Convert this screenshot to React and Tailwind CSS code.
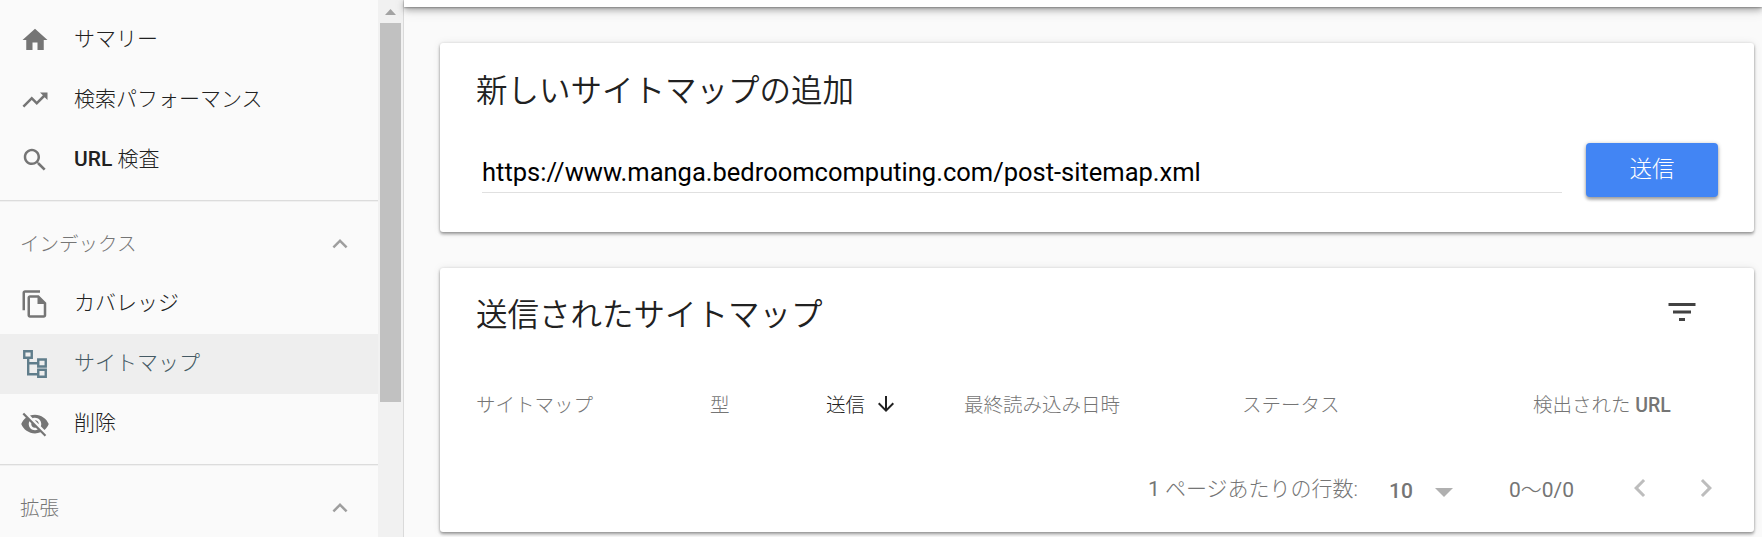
const ICONS = {
  home: "M10 20v-6h4v6h5v-8h3L12 3 2 12h3v8z",
  trend: "M16 6l2.29 2.29-4.88 4.88-4-4L2 16.59 3.41 18l6-6 4 4 6.3-6.29L22 12V6z",
  search:
    "M15.5 14h-.79l-.28-.27C15.41 12.59 16 11.11 16 9.5 16 5.91 13.09 3 9.5 3S3 5.91 3 9.5 5.91 16 9.5 16c1.61 0 3.09-.59 4.23-1.57l.27.28v.79l5 4.99L20.49 19l-4.99-5zm-6 0C7.01 14 5 11.99 5 9.5S7.01 5 9.5 5 14 7.01 14 9.5 11.99 14 9.5 14z",
  copy: "M16 1H4c-1.1 0-2 .9-2 2v14h2V3h12V1zm-1 4H8c-1.1 0-1.99.9-1.99 2L6 21c0 1.1.89 2 1.99 2H19c1.1 0 2-.9 2-2V11l-6-6zM8 21V7h6v5h5v9H8z",
  hidden:
    "M12 7c2.76 0 5 2.24 5 5 0 .65-.13 1.26-.36 1.83l2.92 2.92c1.51-1.26 2.7-2.89 3.43-4.75-1.73-4.39-6-7.5-11-7.5-1.4 0-2.74.25-3.98.7l2.16 2.16C10.74 7.13 11.35 7 12 7zM2 4.27l2.28 2.28.46.46C3.08 8.3 1.78 10.02 1 12c1.73 4.39 6 7.5 11 7.5 1.55 0 3.03-.3 4.38-.84l.42.42L19.73 22 21 20.73 3.27 3 2 4.27zM7.53 9.8l1.55 1.55c-.05.21-.08.43-.08.65 0 1.66 1.34 3 3 3 .22 0 .44-.03.65-.08l1.55 1.55c-.67.33-1.41.53-2.2.53-2.76 0-5-2.24-5-5 0-.79.2-1.53.53-2.2zm4.31-.78l3.15 3.15.02-.16c0-1.66-1.34-3-3-3l-.17.01z",
  up: "M12 8l-6 6 1.41 1.41L12 10.83l4.59 4.58L18 14z",
  left: "M15.41 7.41L14 6l-6 6 6 6 1.41-1.41L10.83 12z",
  right: "M10 6L8.59 7.41 13.17 12l-4.58 4.59L10 18l6-6z",
  filter: "M10 18h4v-2h-4v2zM3 6v2h18V6H3zm3 7h12v-2H6v2z",
  down: "M20 12l-1.41-1.41L13 16.17V4h-2v12.17l-5.58-5.59L4 12l8 8 8-8z",
};

function Icon({ name, className }) {
  return (
    <svg viewBox="0 0 24 24" fill="currentColor" className={className}>
      <path d={ICONS[name]} />
    </svg>
  );
}

function SitemapIcon() {
  return (
    <svg viewBox="0 0 30 30" fill="none" stroke="#607d8b" strokeWidth="2.4" className="size-[30px] shrink-0">
      <path d="M4.25 2.25h7.5v6.5h-7.5zM18.25 10.5h7.5v7h-7.5zM18.25 20.75h7.5v7h-7.5zM8.2 9v16.3h10M8.2 14.2h10" />
    </svg>
  );
}

function NavItem({ icon, label, selected }) {
  return (
    <a
      className={
        selected
          ? "flex h-[60px] shrink-0 items-center bg-[#eeeeee] pl-5 text-[#455a64]"
          : "flex h-[60px] shrink-0 items-center pl-5 text-[#212121]"
      }
    >
      {selected ? <SitemapIcon /> : <Icon name={icon} className="size-[30px] shrink-0 text-[#757575]" />}
      <span className="pb-0.5 pl-6 text-[21px] leading-none">{label}</span>
    </a>
  );
}

function NavHeader({ label }) {
  return (
    <div className="flex h-[72px] shrink-0 items-center justify-between pl-5 pr-[23px] pt-3.5 text-[#757575]">
      <span className="text-[19.5px] leading-none">{label}</span>
      <Icon name="up" className="mb-0.5 size-[30px] text-[#9e9e9e]" />
    </div>
  );
}

const CARD =
  "flex flex-col rounded-[3px] bg-white shadow-[0_3px_3px_rgba(0,0,0,0.16),0_1px_3px_rgba(0,0,0,0.32),0_0_8px_rgba(0,0,0,0.08)]";

export default function App() {
  return (
    <div className="flex h-[537px] w-[1762px] overflow-hidden bg-[#fafafa] font-['Roboto','Noto_Sans_CJK_JP',sans-serif] font-light">
      <nav className="flex w-[378px] shrink-0 flex-col pt-2.5">
        <NavItem icon="home" label="サマリー" />
        <NavItem icon="trend" label="検索パフォーマンス" />
        <NavItem icon="search" label={<><span className="font-medium">URL</span> 検査</>} />
        <div className="mt-2.5 h-0.5 shrink-0 border-t border-[#dcdcdc] bg-[#f0f0f0]" />
        <NavHeader label="インデックス" />
        <NavItem icon="copy" label="カバレッジ" />
        <NavItem selected label="サイトマップ" />
        <NavItem icon="hidden" label="削除" />
        <div className="mt-2.5 h-0.5 shrink-0 border-t border-[#dcdcdc] bg-[#f0f0f0]" />
        <NavHeader label="拡張" />
      </nav>

      <div className="flex w-[26px] shrink-0 flex-col border-r border-[#dadada] bg-[#f1f1f1] pl-0.5 pr-0.5">
        <div className="flex h-[23px] items-center justify-center">
          <svg viewBox="0 0 11 6" className="h-1.5 w-[11px] text-[#a3a3a3]" fill="currentColor">
            <path d="M0 6L5.5 0 11 6z" />
          </svg>
        </div>
        <div className="h-[379px] w-[21px] bg-[#c1c1c1]" />
      </div>

      <main className="flex min-w-0 grow flex-col">
        <div className="h-[7px] shrink-0 bg-white shadow-[0_3px_6px_rgba(0,0,0,0.3),0_3px_14px_rgba(0,0,0,0.12),0_1px_2px_rgba(0,0,0,0.3)]" />
        <div className="flex flex-col gap-9 pl-9 pr-2 pt-9">
          <section className={`${CARD} h-[189px] px-9 pt-[31px]`}>
            <h2 className="text-[31.5px] leading-[36px] font-[350] text-[#212121]">新しいサイトマップの追加</h2>
            <div className="mt-[33px] flex">
              <div className="ml-1.5 mr-6 flex h-[50px] grow items-end border-b border-[#e0e0e0] pb-[7px] text-[25.5px] leading-none font-normal text-black">
                https://www.manga.bedroomcomputing.com/post-sitemap.xml
              </div>
              <button className="flex h-[54px] w-[132px] items-center justify-center rounded bg-[#4285f4] pb-0.5 text-[22.5px] leading-none text-white shadow-[0_3px_3px_rgba(0,0,0,0.2),0_1px_4px_rgba(0,0,0,0.32)]">
                送信
              </button>
            </div>
          </section>

          <section className={`${CARD} h-[264px] px-9 pt-[26px]`}>
            <div className="flex h-[38px] items-start justify-between">
              <h2 className="pt-1 text-[31.5px] leading-[36px] font-[350] text-[#212121]">送信されたサイトマップ</h2>
              <Icon name="filter" className="mr-[18px] size-9 text-[#424242]" />
            </div>
            <div className="mt-[59px] flex h-[30px] items-center text-[19.5px] leading-none text-[#757575]">
              <span className="w-[234px]">サイトマップ</span>
              <span className="w-[116px]">型</span>
              <span className="flex w-[138px] items-center gap-2 text-[#212121]">
                送信
                <Icon name="down" className="mb-1 ml-px size-6" />
              </span>
              <span className="w-[278px]">最終読み込み日時</span>
              <span className="w-[291px]">ステータス</span>
              <span>
                検出された <span className="font-medium">URL</span>
              </span>
            </div>
            <div className="mt-[50px] flex h-9 items-center text-[21px] leading-none text-[#757575]">
              <span className="ml-[672px] w-[241px] shrink-0"><span className="font-normal">1</span> ページあたりの行数:</span>
              <span className="w-[46px] shrink-0 pt-1 font-medium">10</span>
              <svg viewBox="0 0 18 9" className="mt-1.5 h-[9px] w-[18px] shrink-0 text-[#b0b0b0]" fill="currentColor">
                <path d="M0 0h18L9 9z" />
              </svg>
              <span className="ml-14 w-[113px] shrink-0 pt-0.5 font-normal">
                0<span className="font-light">〜</span>0/0
              </span>
              <Icon name="left" className="mb-0.5 size-9 shrink-0 text-[#bdbdbd]" />
              <Icon name="right" className="mb-0.5 ml-[30px] size-9 shrink-0 text-[#bdbdbd]" />
            </div>
          </section>
        </div>
      </main>
    </div>
  );
}
